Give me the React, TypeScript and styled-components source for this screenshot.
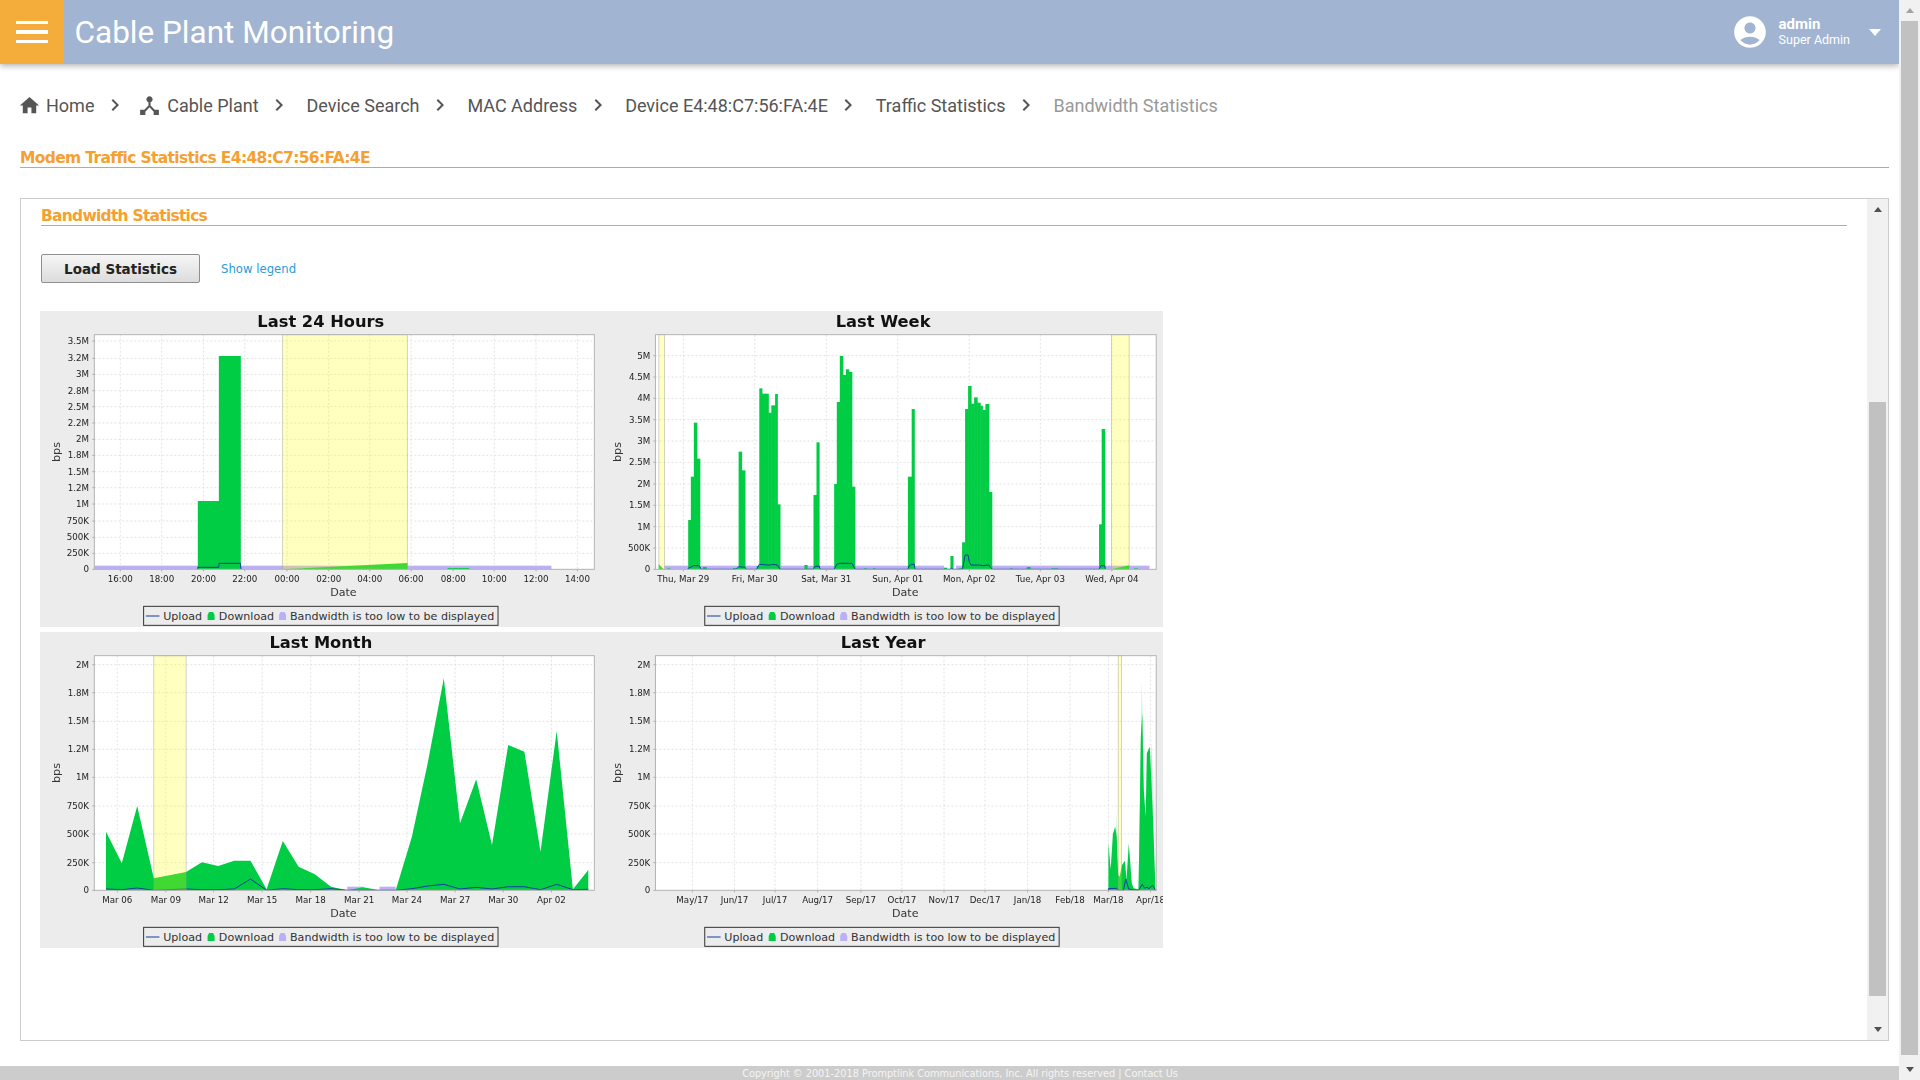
import styled, { createGlobalStyle } from 'styled-components';
import { MdAccountCircle, MdChevronRight, MdDeviceHub, MdHome } from 'react-icons/md';

const GlobalStyle = createGlobalStyle`
  html, body {
    margin: 0;
    padding: 0;
    height: 100%;
    overflow: hidden;
    background: #fff;
    font-family: Roboto, "Liberation Sans", sans-serif;
  }
`;

// chart coordinates below are read off the original picture, in zoom pixels
type Bar = [number, number, number];
type Tick = [string, number];

interface ChartSpec {
  title: string;
  col: 'left' | 'right';
  row: 'top' | 'bottom';
  plot: { l: number; r: number; t: number; b: number };
  yTicks: Tick[];
  xTicks: Tick[];
  yellow: [number, number][];
  lavender: [number, number][];
  bars?: Bar[];
  area?: string;
  faintArea?: string;
  upload: string;
}

const monthYTicks: Tick[] = [
  ['2M', 104],
  ['1.8M', 188],
  ['1.5M', 274],
  ['1.2M', 358],
  ['1M', 442],
  ['750K', 528],
  ['500K', 612],
  ['250K', 698],
  ['0', 781],
];

const charts: ChartSpec[] = [
  {
    title: 'Last 24 Hours',
    col: 'left',
    row: 'top',
    plot: { l: 171, r: 1500, t: 104, b: 808 },
    yTicks: [
      ['3.5M', 123],
      ['3.2M', 175],
      ['3M', 223],
      ['2.8M', 272],
      ['2.5M', 320],
      ['2.2M', 369],
      ['2M', 418],
      ['1.8M', 466],
      ['1.5M', 515],
      ['1.2M', 563],
      ['1M', 612],
      ['750K', 663],
      ['500K', 712],
      ['250K', 760],
      ['0', 808],
    ],
    xTicks: [
      ['16:00', 240],
      ['18:00', 350],
      ['20:00', 461],
      ['22:00', 571],
      ['00:00', 683],
      ['02:00', 794],
      ['04:00', 903],
      ['06:00', 1013],
      ['08:00', 1125],
      ['10:00', 1234],
      ['12:00', 1345],
      ['14:00', 1455],
    ],
    yellow: [[671, 1003]],
    lavender: [[171, 1386]],
    bars: [
      [446, 502, 603],
      [502, 559, 168],
      [1110, 1166, 804],
    ],
    area: '671,808 1003,789 1003,808',
    upload: '446,808 446,802 502,802 502,790 559,790 561,808',
  },
  {
    title: 'Last Week',
    col: 'right',
    row: 'top',
    plot: { l: 174, r: 1505, t: 104, b: 808 },
    yTicks: [
      ['5M', 167],
      ['4.5M', 231],
      ['4M', 295],
      ['3.5M', 359],
      ['3M', 423],
      ['2.5M', 487],
      ['2M', 552],
      ['1.5M', 616],
      ['1M', 680],
      ['500K', 744],
      ['0', 808],
    ],
    xTicks: [
      ['Thu, Mar 29', 248],
      ['Fri, Mar 30', 438],
      ['Sat, Mar 31', 628],
      ['Sun, Apr 01', 818],
      ['Mon, Apr 02', 1008],
      ['Tue, Apr 03', 1197],
      ['Wed, Apr 04', 1387],
    ],
    yellow: [
      [183, 198],
      [1386, 1433],
    ],
    lavender: [
      [198, 941],
      [973, 1487],
    ],
    bars: [
      [205, 212, 805],
      [261, 268, 660],
      [268, 276, 530],
      [276, 284, 368],
      [284, 292, 476],
      [300, 309, 801],
      [380, 395, 804],
      [395, 403, 455],
      [403, 412, 511],
      [443, 450, 798],
      [450, 457, 265],
      [457, 474, 281],
      [474, 482, 338],
      [482, 492, 316],
      [492, 498, 282],
      [498, 505, 613],
      [570, 577, 795],
      [577, 594, 806],
      [594, 602, 585],
      [602, 609, 427],
      [649, 656, 552],
      [656, 664, 306],
      [664, 672, 168],
      [672, 680, 225],
      [680, 688, 208],
      [688, 696, 216],
      [696, 704, 560],
      [728, 735, 805],
      [752, 758, 805],
      [845, 855, 530],
      [855, 862, 327],
      [941, 948, 803],
      [958, 965, 768],
      [981, 989, 805],
      [989, 997, 727],
      [997, 1005, 327],
      [1005, 1013, 258],
      [1013, 1021, 311],
      [1021, 1029, 292],
      [1029, 1037, 308],
      [1037, 1043, 317],
      [1043, 1051, 330],
      [1051, 1060, 312],
      [1060, 1068, 576],
      [1117, 1122, 805],
      [1161, 1170, 801],
      [1227, 1243, 805],
      [1353, 1360, 673],
      [1360, 1368, 387],
      [1446, 1456, 805],
    ],
    area: '183,808 183,793 196,808 1386,808 1433,796 1433,808',
    upload:
      '261,808 261,805 276,797 288,797 292,800 295,808 388,808 395,800 412,802 415,808 443,808 450,793 472,795 480,795 484,793 498,795 505,808 594,808 597,800 609,798 612,808 649,808 656,793 664,790 696,790 705,808 845,808 848,798 855,793 862,793 864,808 958,808 961,804 965,808 990,808 997,765 1005,765 1008,785 1013,795 1035,795 1045,797 1060,795 1065,803 1070,808 1353,808 1358,797 1368,797 1370,808',
  },
  {
    title: 'Last Month',
    col: 'left',
    row: 'bottom',
    plot: { l: 171, r: 1500, t: 77, b: 781 },
    yTicks: monthYTicks,
    xTicks: [
      ['Mar 06', 232],
      ['Mar 09', 361],
      ['Mar 12', 488],
      ['Mar 15', 617],
      ['Mar 18', 746],
      ['Mar 21', 875],
      ['Mar 24', 1002],
      ['Mar 27', 1130],
      ['Mar 30', 1258],
      ['Apr 02', 1386],
    ],
    yellow: [[329, 415]],
    lavender: [
      [843, 886],
      [929, 972],
    ],
    area: '202,781 202,605 244,700 285,528 329,745 415,726 457,697 500,708 543,692 586,692 629,778 672,633 714,710 757,733 800,770 843,781 886,772 929,781 972,781 1015,620 1057,400 1100,145 1143,580 1186,448 1228,645 1271,345 1314,365 1357,665 1400,303 1443,778 1484,720 1484,781',
    upload:
      '202,777 244,779 285,774 329,781 415,777 457,779 500,779 543,777 586,747 629,781 672,776 714,779 757,779 800,776 843,781 972,781 1015,776 1057,768 1100,763 1143,777 1186,772 1228,777 1271,770 1314,770 1357,779 1400,763 1443,779 1484,778',
  },
  {
    title: 'Last Year',
    col: 'right',
    row: 'bottom',
    plot: { l: 174, r: 1505, t: 77, b: 781 },
    yTicks: monthYTicks,
    xTicks: [
      ['May/17', 272],
      ['Jun/17', 384],
      ['Jul/17', 492],
      ['Aug/17', 605],
      ['Sep/17', 720],
      ['Oct/17', 829],
      ['Nov/17', 941],
      ['Dec/17', 1050],
      ['Jan/18', 1163],
      ['Feb/18', 1276],
      ['Mar/18', 1378],
      ['Apr/18', 1490],
    ],
    yellow: [[1404, 1413]],
    lavender: [],
    area: '1378,781 1378,640 1384,718 1390,612 1396,590 1400,620 1404,735 1408,740 1414,705 1422,692 1426,750 1432,640 1440,760 1445,775 1458,778 1460,640 1464,320 1468,250 1472,480 1477,560 1480,370 1488,350 1492,450 1497,580 1503,781',
    faintArea: '1396,781 1399,540 1402,781 M 1458,781 1467,155 1474,781 1480,781 1493,335 1500,781',
    upload:
      '1378,781 1378,776 1400,775 1404,781 1418,781 1424,747 1432,778 1458,781 1468,763 1474,775 1480,772 1486,776 1495,765 1503,781',
  },
];

function Chart({ spec }: { spec: ChartSpec }) {
  const width = spec.col === 'left' ? 562 : 561;
  const dx = spec.col === 'left' ? 10 : 12;
  const dy = spec.row === 'top' ? 11 : 2;
  const px = (z: number) => z / 2.658 - dx;
  const py = (z: number) => z / 3 - dy;
  const points = (list: string) =>
    list
      .split(' ')
      .map((p) => {
        const [x, y] = p.split(',').map(Number);
        return `${px(x).toFixed(1)},${py(y).toFixed(1)}`;
      })
      .join(' ');

  const { l, r, t, b } = spec.plot;
  const center = spec.col === 'left' ? 833 : 838;
  const legendLeft = spec.col === 'left' ? 302 : 305;
  const labelRight = spec.col === 'left' ? 157 : 160;
  const markerAt = (z: number, color: string) => {
    const x0 = px(legendLeft + z);
    const c = py(b + 140);
    return (
      <polygon
        points={`${x0},${c + 4} ${x0},${c - 1} ${x0 + 1.5},${c - 4} ${x0 + 5.5},${c - 4} ${x0 + 7},${c - 1} ${x0 + 7},${c + 4}`}
        fill={color}
      />
    );
  };

  return (
    <ChartFrame viewBox={`0 0 ${width} 316`} $width={width}>
      <rect width={width} height="316" fill="#ececec" />
      <ChartLayer>
        <TitleText x={px(spec.col === 'left' ? 773 : 779)} y={py(b - 726)} textAnchor="middle">
          {spec.title}
        </TitleText>

        <rect x={px(l)} y={py(t)} width={px(r) - px(l)} height={py(b) - py(t)} fill="#fff" />

        {spec.yTicks.map(([label, z]) => (
          <g key={label}>
            <GridLine x1={px(l)} x2={px(r)} y1={py(z)} y2={py(z)} />
            <TickMark x1={px(l) - 2} x2={px(l)} y1={py(z)} y2={py(z)} />
            <TickText x={px(labelRight)} y={py(z) + 3.1} textAnchor="end">
              {label}
            </TickText>
          </g>
        ))}
        {spec.xTicks.map(([label, z]) => (
          <g key={label}>
            <GridLine x1={px(z)} x2={px(z)} y1={py(t)} y2={py(b)} />
            <TickMark x1={px(z)} x2={px(z)} y1={py(b)} y2={py(b) + 2} />
            <TickText x={px(z)} y={py(b + 37)} textAnchor="middle">
              {label}
            </TickText>
          </g>
        ))}

        {spec.lavender.map(([x0, x1]) => (
          <rect key={x0} x={px(x0)} y={py(b - 11)} width={px(x1) - px(x0)} height={py(b) - py(b - 11)} fill="#bbb0f5" />
        ))}
        {spec.faintArea &&
          spec.faintArea.split(' M ').map((part) => <polygon key={part} points={points(part)} fill="#00cc44" opacity={0.35} />)}
        {spec.bars?.map(([x0, x1, top]) => (
          <rect key={x0} x={px(x0)} y={py(top)} width={px(x1) - px(x0) + 0.5} height={py(b) - py(top)} fill="#00cc44" />
        ))}
        {spec.area && <polygon points={points(spec.area)} fill="#00cc44" />}
        <polyline points={points(spec.upload)} fill="none" stroke="#0f3f9e" strokeWidth={1} />

        {spec.yellow.map(([x0, x1]) => (
          <rect
            key={x0}
            x={px(x0)}
            y={py(t)}
            width={px(x1) - px(x0)}
            height={py(b) - py(t)}
            fill="rgba(255,255,0,0.25)"
            stroke="rgba(150,150,150,0.5)"
            strokeWidth={0.8}
          />
        ))}
        <rect x={px(l)} y={py(t)} width={px(r) - px(l)} height={py(b) - py(t)} fill="none" stroke="#b4b4b4" strokeWidth={1} />

        <AxisText x={px(center)} y={py(b + 81)} textAnchor="middle">
          Date
        </AxisText>
        <AxisText
          transform={`translate(${px(spec.col === 'left' ? 70 : 72) + 3.5} ${py((t + b) / 2)}) rotate(-90)`}
          textAnchor="middle"
        >
          bps
        </AxisText>

        <rect
          x={px(legendLeft)}
          y={py(b + 111)}
          width={942 / 2.658}
          height={19}
          fill="#ececec"
          stroke="#333"
          strokeWidth={1}
        />
        <line
          x1={px(legendLeft + 6)}
          x2={px(legendLeft + 42)}
          y1={py(b + 140)}
          y2={py(b + 140)}
          stroke="#0f3f9e"
          strokeWidth={1}
        />
        <AxisText x={px(legendLeft + 52)} y={py(b + 152)}>
          Upload
        </AxisText>
        {markerAt(170, '#00cc44')}
        <AxisText x={px(legendLeft + 200)} y={py(b + 152)}>
          Download
        </AxisText>
        {markerAt(360, '#bbb0f5')}
        <AxisText x={px(legendLeft + 389)} y={py(b + 152)}>
          Bandwidth is too low to be displayed
        </AxisText>
      </ChartLayer>
    </ChartFrame>
  );
}

function ScrollRail({ top, length }: { top: number; length: number }) {
  return (
    <Rail>
      <ArrowCell>
        <UpArrow $faded={top === 0} />
      </ArrowCell>
      <RailTrack>
        <RailThumb $top={top} $length={length} />
      </RailTrack>
      <ArrowCell>
        <DownArrow />
      </ArrowCell>
    </Rail>
  );
}

const crumbs = ['Device Search', 'MAC Address', 'Device E4:48:C7:56:FA:4E', 'Traffic Statistics'];

export default function App() {
  return (
    <Shell>
      <GlobalStyle />
      <Main>
        <Header>
          <MenuButton>
            <MenuBar />
            <MenuBar />
            <MenuBar />
          </MenuButton>
          <AppTitle>Cable Plant Monitoring</AppTitle>
          <UserBox>
            <MdAccountCircle size={38} color="#fff" />
            <UserText>
              <UserName>admin</UserName>
              <UserRole>Super Admin</UserRole>
            </UserText>
            <UserCaret />
          </UserBox>
        </Header>

        <Breadcrumb>
          <Crumb>
            <MdHome size={23} />
            Home
          </Crumb>
          <MdChevronRight size={24} />
          <Crumb $icon>
            <MdDeviceHub size={25} />
            Cable Plant
          </Crumb>
          <MdChevronRight size={24} />
          {crumbs.map((c) => (
            <CrumbGroup key={c}>
              <Crumb>{c}</Crumb>
              <MdChevronRight size={24} />
            </CrumbGroup>
          ))}
          <Crumb $current>Bandwidth Statistics</Crumb>
        </Breadcrumb>

        <PageHeading>Modem Traffic Statistics E4:48:C7:56:FA:4E</PageHeading>

        <Panel>
          <PanelBody>
            <PanelHeading>Bandwidth Statistics</PanelHeading>
            <Toolbar>
              <LoadButton>Load Statistics</LoadButton>
              <LegendLink>Show legend</LegendLink>
            </Toolbar>
            <ChartGrid>
              {charts.map((c) => (
                <Chart key={c.title} spec={c} />
              ))}
            </ChartGrid>
          </PanelBody>
          <ScrollRail top={182} length={594} />
        </Panel>

        <Footer>Copyright © 2001-2018 Promptlink Communications, Inc. All rights reserved | Contact Us</Footer>
      </Main>
      <ScrollRail top={0} length={1034} />
    </Shell>
  );
}

const Shell = styled.div`
  display: flex;
  height: 100vh;
  overflow: hidden;
`;
const Main = styled.div`
  flex: 1;
  min-width: 0;
  display: flex;
  flex-direction: column;
`;

const Header = styled.header`
  height: 64px;
  flex-shrink: 0;
  display: flex;
  align-items: center;
  background-color: #a1b4d2;
  box-shadow: 0 2px 6px rgba(0, 0, 0, 0.3);
`;
const MenuButton = styled.div`
  width: 64px;
  height: 64px;
  background-color: #f4ac3b;
  display: flex;
  flex-direction: column;
  align-items: center;
  justify-content: center;
  gap: 6px;
`;
const MenuBar = styled.span`
  width: 32px;
  height: 3.5px;
  background-color: #fff;
`;
const AppTitle = styled.h1`
  margin: 0 0 0 10.5px;
  font-size: 31.5px;
  font-weight: 400;
  color: #fff;
`;
const UserBox = styled.div`
  margin-left: auto;
  display: flex;
  align-items: center;
  color: #fff;
  padding-right: 18px;
`;
const UserText = styled.div`
  margin-left: 10px;
  display: flex;
  flex-direction: column;
  line-height: 16px;
`;
const UserName = styled.span`
  font-size: 15px;
  font-weight: 700;
`;
const UserRole = styled.span`
  font-size: 12.5px;
`;
const UserCaret = styled.span`
  margin-left: 19px;
  width: 0;
  height: 0;
  border-left: 6.5px solid transparent;
  border-right: 6.5px solid transparent;
  border-top: 7px solid #fff;
`;

const Breadcrumb = styled.nav`
  margin-top: 27px;
  height: 28px;
  flex-shrink: 0;
  padding-left: 18px;
  display: flex;
  align-items: center;
  font-size: 18px;
  color: #555;
  svg {
    flex-shrink: 0;
  }
  > svg {
    margin-left: 8.4px;
  }
`;
const CrumbGroup = styled.div`
  display: flex;
  align-items: center;
  svg {
    margin-left: 8.4px;
  }
`;
const Crumb = styled.span<{ $current?: boolean; $icon?: boolean }>`
  display: flex;
  align-items: center;
  gap: 5px;
  white-space: nowrap;
  margin-left: ${(p) => (p.$icon ? '10.4px' : '0')};
  color: ${(p) => (p.$current ? '#999' : '#555')};
  ${CrumbGroup} &, &:last-child {
    margin-left: 15.5px;
  }
`;

const PageHeading = styled.h2`
  margin: 29px 10px 0 20px;
  height: 19px;
  line-height: 21px;
  flex-shrink: 0;
  border-bottom: 1.5px solid #e9a33c;
  font-family: 'DejaVu Sans', sans-serif;
  font-size: 15.5px;
  letter-spacing: -0.65px;
  font-weight: 700;
  color: #f5a02f;
`;

const Panel = styled.section`
  margin: 29.5px 10px 0 20px;
  height: 843px;
  flex-shrink: 0;
  display: flex;
  box-sizing: border-box;
  border: 1px solid #ccc;
`;
const PanelBody = styled.div`
  flex: 1;
  min-width: 0;
  padding: 8px 20px 0;
`;
const PanelHeading = styled.h3`
  margin: 0;
  height: 18px;
  line-height: 19px;
  border-bottom: 1.5px solid #e9a33c;
  font-family: 'DejaVu Sans', sans-serif;
  font-size: 15.5px;
  letter-spacing: -0.75px;
  font-weight: 700;
  color: #f5a02f;
`;
const Toolbar = styled.div`
  margin-top: 28.5px;
  display: flex;
  align-items: center;
`;
const LoadButton = styled.button`
  width: 159px;
  height: 29px;
  box-sizing: border-box;
  padding: 0;
  border: 1px solid #8f8f8f;
  border-radius: 2px;
  background: linear-gradient(#f6f6f6, #dcdcdc);
  font-family: 'DejaVu Sans', sans-serif;
  font-size: 13.5px;
  font-weight: 700;
  color: #222;
`;
const LegendLink = styled.a`
  margin-left: 21px;
  font-family: 'DejaVu Sans', sans-serif;
  font-size: 11.7px;
  color: #2b9bd6;
`;
const ChartGrid = styled.div`
  margin: 28px 0 0 -1px;
  width: 1123px;
  display: grid;
  grid-template-columns: 562px 561px;
  row-gap: 5px;
`;
const ChartFrame = styled.svg<{ $width: number }>`
  display: block;
  width: ${(p) => p.$width}px;
  height: 316px;
  font-family: 'DejaVu Sans', sans-serif;
`;
const ChartLayer = styled.g`
  filter: blur(0.3px);
`;
const TitleText = styled.text`
  font-size: 16.3px;
  font-weight: 700;
  fill: #111;
`;
const TickText = styled.text`
  font-size: 8.7px;
  fill: #222;
`;
const AxisText = styled.text`
  font-size: 11.1px;
  fill: #333;
`;
const GridLine = styled.line`
  stroke: #dcdcdc;
  stroke-width: 0.8;
  stroke-dasharray: 2 2;
`;
const TickMark = styled.line`
  stroke: #999;
  stroke-width: 0.8;
`;

const Rail = styled.div`
  width: 21px;
  flex-shrink: 0;
  display: grid;
  grid-template-rows: 21px 1fr 21px;
  background-color: #f1f1f1;
`;
const ArrowCell = styled.div`
  display: flex;
  align-items: center;
  justify-content: center;
`;
const UpArrow = styled.span<{ $faded?: boolean }>`
  width: 0;
  height: 0;
  border-left: 4.5px solid transparent;
  border-right: 4.5px solid transparent;
  border-bottom: 5px solid ${(p) => (p.$faded ? '#a3a3a3' : '#505050')};
`;
const DownArrow = styled.span`
  width: 0;
  height: 0;
  border-left: 4.5px solid transparent;
  border-right: 4.5px solid transparent;
  border-top: 5px solid #505050;
`;
const RailTrack = styled.div`
  min-height: 0;
  display: flex;
  flex-direction: column;
  align-items: center;
`;
const RailThumb = styled.div<{ $top: number; $length: number }>`
  width: 17px;
  flex-shrink: 0;
  margin-top: ${(p) => p.$top}px;
  height: ${(p) => p.$length}px;
  background-color: #c1c1c1;
`;

const Footer = styled.footer`
  margin-top: auto;
  height: 14px;
  flex-shrink: 0;
  padding-left: 21px;
  overflow: hidden;
  background-color: #ccc;
  text-align: center;
  line-height: 16px;
  font-family: 'DejaVu Sans', sans-serif;
  font-size: 9.75px;
  color: #f4f4f4;
`;
